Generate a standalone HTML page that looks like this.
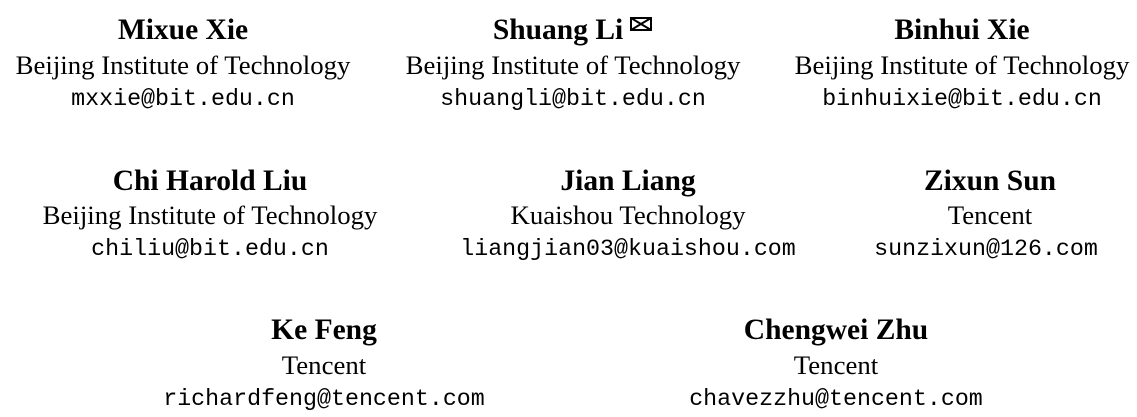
<!DOCTYPE html>
<html><head><style>
body{margin:0;width:1137px;height:417px;background:#fff;position:relative;overflow:hidden;font-family:"Liberation Serif",serif;color:#000}
.b{position:absolute;width:0}
.b div{position:absolute;left:0;transform:translateX(-50%);white-space:nowrap;line-height:1}
.n{font-weight:bold;font-size:29.5px}
.a{font-size:26.8px}
.e{font-family:"Liberation Mono",monospace;font-size:23.3px}
</style></head><body>
<div class="b" style="left:183px;top:0"><div class="n" style="top:16px">Mixue Xie</div><div class="a" style="top:52px">Beijing Institute of Technology</div><div class="e" style="top:88px">mxxie@bit.edu.cn</div></div>
<div class="b" style="left:558px;top:0"><div class="n" style="top:16px">Shuang Li</div></div>
<div class="b" style="left:573px;top:0"><div class="a" style="top:52px">Beijing Institute of Technology</div><div class="e" style="top:88px">shuangli@bit.edu.cn</div></div>
<svg style="position:absolute;left:630px;top:17px" width="22" height="14" viewBox="0 0 22 14"><rect x="1" y="1" width="20" height="12" fill="none" stroke="#000" stroke-width="2"/><path d="M1 1L21 13M21 1L1 13" stroke="#000" stroke-width="2"/></svg>
<div class="b" style="left:962px;top:0"><div class="n" style="top:16px">Binhui Xie</div><div class="a" style="top:52px">Beijing Institute of Technology</div><div class="e" style="top:88px">binhuixie@bit.edu.cn</div></div>

<div class="b" style="left:210px;top:0"><div class="n" style="top:167px">Chi Harold Liu</div><div class="a" style="top:202px">Beijing Institute of Technology</div><div class="e" style="top:238px">chiliu@bit.edu.cn</div></div>
<div class="b" style="left:628px;top:0"><div class="n" style="top:167px">Jian Liang</div><div class="a" style="top:202px">Kuaishou Technology</div><div class="e" style="top:238px">liangjian03@kuaishou.com</div></div>
<div class="b" style="left:990px;top:0"><div class="n" style="top:167px">Zixun Sun</div><div class="a" style="top:202px">Tencent</div></div>
<div class="b" style="left:986px;top:0"><div class="e" style="top:238px">sunzixun@126.com</div></div>

<div class="b" style="left:324px;top:0"><div class="n" style="top:316px">Ke Feng</div><div class="a" style="top:352px">Tencent</div><div class="e" style="top:388px">richardfeng@tencent.com</div></div>
<div class="b" style="left:836px;top:0"><div class="n" style="top:316px">Chengwei Zhu</div><div class="a" style="top:352px">Tencent</div><div class="e" style="top:388px">chavezzhu@tencent.com</div></div>
</body></html>
